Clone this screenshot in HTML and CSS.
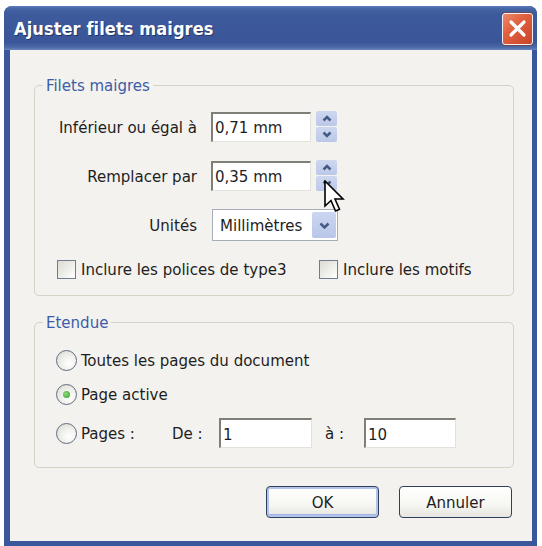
FILE: index.html
```html
<!DOCTYPE html>
<html lang="fr">
<head>
<meta charset="utf-8">
<title>Ajuster filets maigres</title>
<link rel="stylesheet" href="styles.css">
</head>
<body>
<div class="window">
  <div class="titlebar">
    <span class="title">Ajuster filets maigres</span>
    <div class="close">
      <svg width="19" height="19" viewBox="0 0 19 19"><path d="M3 3 L16 16 M16 3 L3 16" stroke="#fff" stroke-width="3.2" stroke-linecap="round"/></svg>
    </div>
  </div>
  <div class="client">
    <fieldset class="group group-1">
      <legend>Filets maigres</legend>
      <div class="form-grid">
        <span class="lbl">Inférieur ou égal à</span>
        <div class="field">
          <div class="textbox w100">0,71 mm</div>
          <div class="spin">
            <div class="spin-btn"><svg width="10" height="7" viewBox="0 0 10 7"><path d="M1.5 5.5 L5 2 L8.5 5.5" fill="none" stroke="#465a84" stroke-width="2.5"/></svg></div>
            <div class="spin-btn"><svg width="10" height="7" viewBox="0 0 10 7"><path d="M1.5 1.5 L5 5 L8.5 1.5" fill="none" stroke="#465a84" stroke-width="2.5"/></svg></div>
          </div>
        </div>
        <span class="lbl">Remplacer par</span>
        <div class="field">
          <div class="textbox w100">0,35 mm</div>
          <div class="spin">
            <div class="spin-btn"><svg width="10" height="7" viewBox="0 0 10 7"><path d="M1.5 5.5 L5 2 L8.5 5.5" fill="none" stroke="#465a84" stroke-width="2.5"/></svg></div>
            <div class="spin-btn"><svg width="10" height="7" viewBox="0 0 10 7"><path d="M1.5 1.5 L5 5 L8.5 1.5" fill="none" stroke="#465a84" stroke-width="2.5"/></svg></div>
          </div>
        </div>
        <span class="lbl">Unités</span>
        <div class="field">
          <div class="select">
            <span class="select-text">Millimètres</span>
            <div class="select-btn"><svg width="11" height="7" viewBox="0 0 11 7"><path d="M1.5 1.5 L5.5 5.5 L9.5 1.5" fill="none" stroke="#465a84" stroke-width="2.5"/></svg></div>
          </div>
        </div>
      </div>
      <div class="checks">
        <label class="check"><span class="box"></span>Inclure les polices de type3</label>
        <label class="check"><span class="box"></span>Inclure les motifs</label>
      </div>
    </fieldset>

    <fieldset class="group group-2">
      <legend>Etendue</legend>
      <div class="radio-row"><span class="radio"></span>Toutes les pages du document</div>
      <div class="radio-row"><span class="radio checked"></span>Page active</div>
      <div class="radio-row pages-row">
        <span class="pages-lbl"><span class="radio"></span>Pages :</span>
        <span class="de-lbl">De :</span>
        <div class="textbox w93">1</div>
        <span class="a-lbl">à :</span>
        <div class="textbox w92">10</div>
      </div>
    </fieldset>

    <div class="buttons">
      <div class="btn default">OK</div>
      <div class="btn">Annuler</div>
    </div>
  </div>
  <svg class="cursor" width="22" height="34" viewBox="0 0 22 34">
    <path d="M1 1 L1 26 L7 20.5 L11.5 31 L15.5 29.3 L11 19 L19 19 Z" fill="#fff" stroke="#000" stroke-width="1.6" stroke-linejoin="miter"/>
  </svg>
</div>
</body>
</html>
```

FILE: styles.css
```css
html, body {
  margin: 0;
  padding: 0;
  background: #ffffff;
  overflow: hidden;
}

body {
  width: 542px;
  height: 546px;
  font-family: "DejaVu Sans Condensed", "DejaVu Sans", sans-serif;
  font-size: 16.7px;
  color: #1e1e1e;
}

.window {
  position: relative;
  margin: 6px 0 0 4px;
  width: 533px;
  height: 540px;
  box-sizing: border-box;
  background: #3b579b;
  border-radius: 8px 8px 0 0;
  padding: 0 5px 5px 6px;
  display: flex;
  flex-direction: column;
}

.titlebar {
  height: 44px;
  flex: none;
  display: flex;
  align-items: center;
  justify-content: space-between;
  margin: 0 -5px 0 -6px;
  padding: 0 4px 0 10px;
  border-radius: 8px 8px 0 0;
  background: linear-gradient(#5d7bbb 0px, #4663a4 3px, #3d5a9c 8px, #3a5699 36px, #4a67a6 41px, #6a85bd 44px);
}

.title {
  font-family: "DejaVu Sans Condensed", "DejaVu Sans", sans-serif;
  font-weight: bold;
  font-size: 18px;
  color: #ffffff;
  text-shadow: 1px 1px 0 #22366a;
  letter-spacing: 0.1px;
}

.close {
  width: 31px;
  height: 32px;
  box-sizing: border-box;
  margin-top: 1px;
  border: 1px solid #f1f1f4;
  border-radius: 3px;
  background: linear-gradient(135deg, #ec8a6c 0%, #e0603e 40%, #c8442a 100%);
  display: flex;
  align-items: center;
  justify-content: center;
  box-shadow: 0 0 0 1px #6a4a5a;
}

.client {
  flex: 1;
  background: #f3f2ee;
  padding: 0 20px 0 24px;
  display: flex;
  flex-direction: column;
}

.group {
  margin: 0;
  width: 480px;
  box-sizing: border-box;
  border: 1px solid #d3d3c6;
  border-radius: 5px;
}

.group legend {
  margin-left: -13px;
  padding: 0 3px;
  line-height: 18px;
  color: #3d5ca8;
}

.group-1 {
  margin-top: 26px;
  padding: 17px 0 16px 21px;
}

.form-grid {
  display: grid;
  grid-template-columns: 141px auto;
  column-gap: 14px;
  row-gap: 18px;
  align-items: center;
}

.lbl {
  text-align: right;
  white-space: nowrap;
}

.field {
  display: flex;
  align-items: center;
  gap: 5px;
}

.textbox {
  height: 30px;
  box-sizing: border-box;
  background: #ffffff;
  border-top: 2px solid #7f7f77;
  border-left: 2px solid #7f7f77;
  border-right: 1px solid #e2e1da;
  border-bottom: 1px solid #e2e1da;
  padding: 0 3px 0 2px;
  display: flex;
  align-items: center;
}

.w100 { width: 100px; }
.w93 { width: 93px; }
.w92 { width: 92px; }

.spin {
  width: 21px;
  height: 31px;
  display: flex;
  flex-direction: column;
  gap: 1px;
}

.spin-btn {
  flex: 1;
  background: linear-gradient(#cdd7f0, #bcc8e8);
  border-radius: 2px;
  display: flex;
  align-items: center;
  justify-content: center;
}

.select {
  margin-left: 1px;
  width: 126px;
  height: 32px;
  box-sizing: border-box;
  border: 1px solid #a7aeb9;
  background: #ffffff;
  display: flex;
  align-items: center;
  justify-content: space-between;
  padding: 2px 1px 2px 7px;
}

.select-btn {
  width: 24px;
  height: 26px;
  border-radius: 2px;
  background: linear-gradient(#cbd6f1, #b9c6e8);
  display: flex;
  align-items: center;
  justify-content: center;
}

.checks {
  margin-top: 18px;
  display: grid;
  grid-template-columns: 262px auto;
}

.check {
  display: flex;
  align-items: center;
  gap: 5px;
  margin-left: 1px;
  white-space: nowrap;
}

.box {
  width: 19px;
  height: 19px;
  flex: none;
  box-sizing: border-box;
  border: 1px solid #6f7b8e;
  background: linear-gradient(135deg, #dcdcd4 0%, #f4f4f0 70%, #ffffff 100%);
}

.group-2 {
  margin-top: 17px;
  padding: 19px 0 19px 21px;
}

.radio-row {
  display: flex;
  align-items: center;
  gap: 4px;
  height: 20px;
  margin-bottom: 14px;
  white-space: nowrap;
}

.pages-row {
  height: 30px;
  margin-top: 7px;
  margin-bottom: 0;
  gap: 0;
}

.pages-lbl {
  width: 116px;
  display: flex;
  align-items: center;
  gap: 4px;
}

.de-lbl { width: 47px; }
.a-lbl { width: 39px; margin-left: 13px; }

.radio {
  width: 21px;
  height: 21px;
  flex: none;
  box-sizing: border-box;
  border-radius: 50%;
  border: 1px solid #5f6b80;
  background: radial-gradient(circle at 65% 65%, #ffffff 0%, #f2f2ee 40%, #d8d8d0 100%);
  display: flex;
  align-items: center;
  justify-content: center;
}

.radio.checked::after {
  content: "";
  width: 7px;
  height: 7px;
  border-radius: 50%;
  background: radial-gradient(circle at 40% 40%, #8fdc7c, #2f9a2a);
}

.buttons {
  margin-top: 18px;
  display: flex;
  justify-content: flex-end;
  gap: 20px;
}

.btn {
  width: 113px;
  height: 32px;
  box-sizing: border-box;
  border: 1px solid #30405c;
  border-radius: 4px;
  background: linear-gradient(#ffffff 0%, #f6f6f2 60%, #e6e5de 100%);
  display: flex;
  align-items: center;
  justify-content: center;
}

.btn.default {
  box-shadow: inset 0 0 0 2px #b3c3ea, inset 0 -1px 0 2px #a0b4e4;
}

.cursor {
  position: absolute;
  left: 320px;
  top: 174px;
}
```
